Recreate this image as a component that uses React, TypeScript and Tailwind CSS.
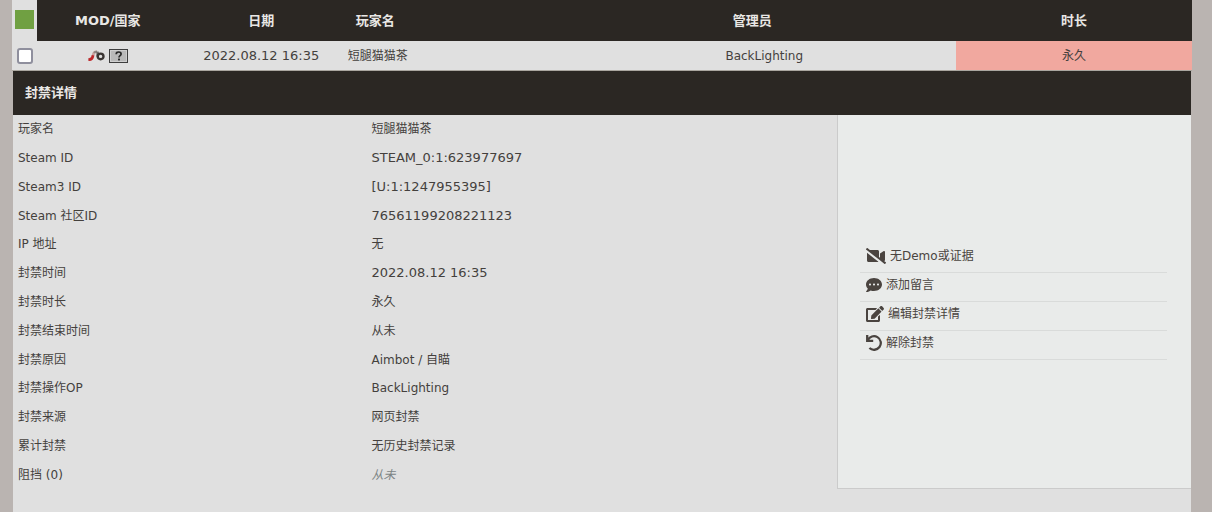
import React from "react";
import { FaCommentDots, FaEdit, FaVideoSlash } from "react-icons/fa";

type Detail = { label: string; value: string; tone?: "numeric" | "muted" };

const details: Detail[] = [
  { label: "玩家名", value: "短腿猫猫茶" },
  { label: "Steam ID", value: "STEAM_0:1:623977697", tone: "numeric" },
  { label: "Steam3 ID", value: "[U:1:1247955395]", tone: "numeric" },
  { label: "Steam 社区ID", value: "76561199208221123", tone: "numeric" },
  { label: "IP 地址", value: "无" },
  { label: "封禁时间", value: "2022.08.12 16:35", tone: "numeric" },
  { label: "封禁时长", value: "永久" },
  { label: "封禁结束时间", value: "从未" },
  { label: "封禁原因", value: "Aimbot / 自瞄" },
  { label: "封禁操作OP", value: "BackLighting" },
  { label: "封禁来源", value: "网页封禁" },
  { label: "累计封禁", value: "无历史封禁记录" },
  { label: "阻挡 (0)", value: "从未", tone: "muted" },
];

const toneClass = {
  numeric: "text-[13px]",
  muted: "italic text-[#7c8485]",
};

const actions = [
  { label: "无Demo或证据", icon: <FaVideoSlash className="h-4 w-5" /> },
  { label: "添加留言", icon: <FaCommentDots className="h-4 w-4" /> },
  { label: "编辑封禁详情", icon: <FaEdit className="h-4 w-[18px]" /> },
  { label: "解除封禁", icon: <UndoIcon /> },
];

function UndoIcon() {
  return (
    <svg className="size-4" viewBox="0 0 16 16" fill="none" stroke="currentColor" strokeWidth="2.3" aria-hidden="true">
      <path d="M1.2 0v5.9h6" />
      <path d="M1.8 5.2A6.8 6.8 0 1 1 3.4 13" />
    </svg>
  );
}

function ModIcon() {
  return (
    <svg className="h-4 w-[18px]" viewBox="0 0 18 16" fill="none" aria-hidden="true">
      <path d="M10 3.8C7.2 3.6 6.4 5 6.2 7.2 6 9.6 4.4 11.4 1 11.2" stroke="#c9a19e" strokeWidth="2.6" />
      <path d="M1.6 11.6c2.3.2 3.9-.8 4.4-4.4" stroke="#c0262a" strokeWidth="2.6" />
      <path d="M7 4.8c.6-.9 1.6-1.3 3-1" stroke="#8d8582" strokeWidth="2" />
      <path d="M10.6 3.6v5" stroke="#6f6967" strokeWidth="2.4" />
      <ellipse cx="13.6" cy="8.4" rx="2.9" ry="2.8" stroke="#3b3634" strokeWidth="2.4" />
    </svg>
  );
}

function UnknownFlag() {
  return (
    <svg className="h-[14px] w-[19px]" viewBox="0 0 19 14" aria-hidden="true">
      <rect x=".5" y=".5" width="18" height="13" fill="#b9b9b9" stroke="#3e3e3e" />
      <rect x="1.5" y="1.5" width="16" height="11" fill="none" stroke="#cecece" />
      <path d="M7.2 5.2c0-1.6 1-2.2 2.4-2.2s2.5.7 2.5 2c0 1.6-2.1 1.7-2.1 3.4" fill="none" stroke="#292929" strokeWidth="1.7" />
      <rect x="9" y="9.6" width="2" height="1.8" fill="#292929" />
    </svg>
  );
}

export default function App() {
  return (
    <main className="flex min-h-screen flex-col bg-[#bab4b1] pr-5 pl-3 font-['DejaVu_Sans','Noto_Sans_CJK_SC',sans-serif] text-xs text-[#44403d]">
      <table className="w-full table-fixed border-separate border-spacing-0 bg-[#e0e0e0]">
        <colgroup>
          <col className="w-[25px]" />
          <col className="w-[12%]" />
          <col className="w-[14%]" />
          <col />
          <col className="w-[32.5%]" />
          <col className="w-[20%]" />
        </colgroup>
        <thead>
          <tr className="h-[41px] bg-[#2b2723] text-[13px] leading-4 text-[#e9e7e5]">
            <th className="bg-[#e0e0e0] p-0 pb-0.5">
              <button type="button" aria-label="全选" className="mx-auto block size-[19px] bg-[#70a042]" />
            </th>
            <th className="p-0">MOD/国家</th>
            <th className="p-0">日期</th>
            <th className="py-0 pr-0 pl-3 text-left">玩家名</th>
            <th className="py-0 pr-6 pl-0">管理员</th>
            <th className="p-0">时长</th>
          </tr>
        </thead>
        <tbody>
          <tr className="h-[30px] text-center *:border-b *:border-[#aaa69f]">
            <td className="p-0">
              <input
                type="checkbox"
                aria-label="短腿猫猫茶"
                className="mx-auto block size-4 appearance-none rounded-[3px] border-2 border-[#8f8f9d] bg-white checked:bg-[#70a042]"
              />
            </td>
            <td className="p-0">
              <div className="flex items-center justify-center gap-1">
                <ModIcon />
                <UnknownFlag />
              </div>
            </td>
            <td className="p-0 text-[13px]">2022.08.12 16:35</td>
            <td className="py-0 pr-0 pl-1 text-left">短腿猫猫茶</td>
            <td className="p-0">BackLighting</td>
            <td className="bg-[#f1a89f] p-0">永久</td>
          </tr>
        </tbody>
      </table>

      <section className="mx-px flex-1 bg-[#e0e0e0]">
        <h2 className="bg-[#2b2723] px-3 py-3 text-[13px] leading-5 font-bold text-[#e9e7e5]">封禁详情</h2>
        <div className="flex">
          <table className="h-[374px] w-[69.95%] table-fixed border-collapse">
            <colgroup>
              <col className="w-[42.9%]" />
              <col />
            </colgroup>
            <tbody>
              {details.map((row) => (
                <tr key={row.label} className="leading-4">
                  <th scope="row" className="py-0 pr-0 pl-[5px] text-left font-normal">
                    <div className="h-4">{row.label}</div>
                  </th>
                  <td className="py-0 pr-0 pl-[5px]">
                    <div className={row.tone ? `h-4 ${toneClass[row.tone]}` : "h-4"}>{row.value}</div>
                  </td>
                </tr>
              ))}
            </tbody>
          </table>
          <aside className="flex flex-1 items-center border-b border-l border-[#cbcbcb] bg-[#e9ebea] pr-6 pl-[22px]">
            <ul className="w-full">
              {actions.map((action) => (
                <li key={action.label} className="border-b border-[#d9dbda]">
                  <a href="#" className="flex items-center gap-1 px-1.5 pt-1 pb-2 leading-4 text-[#4a4440]">
                    {action.icon}
                    {action.label}
                  </a>
                </li>
              ))}
            </ul>
          </aside>
        </div>
      </section>
    </main>
  );
}
